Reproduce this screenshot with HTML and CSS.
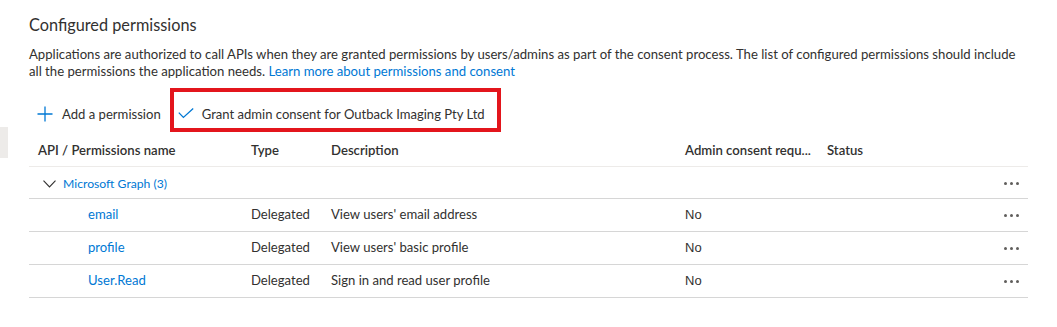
FILE: index.html
```html
<!DOCTYPE html>
<html lang="en">
<head>
<meta charset="utf-8">
<title>Configured permissions</title>
<link rel="stylesheet" href="styles.css">
</head>
<body>
<div class="page">
  <div class="side"><div class="side-block"></div></div>
  <main class="main">
    <h2 class="title">Configured permissions</h2>
    <p class="desc">Applications are authorized to call APIs when they are granted permissions by users/admins as part of the consent process. The list of configured permissions should include all the permissions the application needs. <a class="link" href="#">Learn more about permissions and consent</a></p>
    <div class="toolbar">
      <button class="tb-btn add-btn" type="button">
        <svg class="ico-plus" width="16" height="16" viewBox="0 0 16 16"><path d="M8 0.5V15.5M0.5 8H15.5" stroke="#0078d4" stroke-width="1.3" fill="none"/></svg>
        <span>Add a permission</span>
      </button>
      <button class="tb-btn grant-btn" type="button">
        <svg class="ico-check" width="16" height="11" viewBox="0 0 16 11"><path d="M0.8 4.6L5.4 9.4L15.2 0.6" stroke="#0078d4" stroke-width="1.3" fill="none"/></svg>
        <span>Grant admin consent for Outback Imaging Pty Ltd</span>
      </button>
    </div>
    <div class="table">
      <div class="row head">
        <div class="cell">API / Permissions name</div>
        <div class="cell">Type</div>
        <div class="cell">Description</div>
        <div class="cell">Admin consent requ...</div>
        <div class="cell">Status</div>
        <div class="cell"></div>
      </div>
      <div class="row group">
        <div class="cell group-name">
          <svg class="chev" width="13" height="8" viewBox="0 0 13 8"><path d="M0.5 0.6L6.5 7L12.5 0.6" stroke="#323130" stroke-width="1.1" fill="none"/></svg>
          <a class="link" href="#">Microsoft Graph (3)</a>
        </div>
        <div class="cell"></div><div class="cell"></div><div class="cell"></div><div class="cell"></div>
        <div class="cell more"><span class="dots"><i></i><i></i><i></i></span></div>
      </div>
      <div class="row item">
        <div class="cell perm"><a class="link" href="#">email</a></div>
        <div class="cell">Delegated</div>
        <div class="cell">View users' email address</div>
        <div class="cell no">No</div>
        <div class="cell"></div>
        <div class="cell more"><span class="dots"><i></i><i></i><i></i></span></div>
      </div>
      <div class="row item">
        <div class="cell perm"><a class="link" href="#">profile</a></div>
        <div class="cell">Delegated</div>
        <div class="cell">View users' basic profile</div>
        <div class="cell no">No</div>
        <div class="cell"></div>
        <div class="cell more"><span class="dots"><i></i><i></i><i></i></span></div>
      </div>
      <div class="row item">
        <div class="cell perm"><a class="link" href="#">User.Read</a></div>
        <div class="cell">Delegated</div>
        <div class="cell">Sign in and read user profile</div>
        <div class="cell no">No</div>
        <div class="cell"></div>
        <div class="cell more"><span class="dots"><i></i><i></i><i></i></span></div>
      </div>
    </div>
  </main>
</div>
</body>
</html>
```
FILE: styles.css
```css
* { box-sizing: border-box; }
body {
  margin: 0;
  background: #ffffff;
  color: #323130;
  font-family: Lato, "Open Sans", sans-serif;
  font-size: 13.1px;
}
.page { display: flex; }
.side { width: 8px; flex: none; }
.side-block { margin-top: 127px; height: 31px; background: #edebe9; }
.main { padding: 13px 0 0 21px; width: 1020px; }

.title {
  margin: 0;
  font-size: 16.3px;
  font-weight: 400;
  line-height: 24px;
  color: #323130;
}
.desc {
  margin: 9px 0 0;
  width: 994px;
  font-size: 13.15px;
  line-height: 17px;
}
.link { color: #0078d4; text-decoration: none; }

.toolbar { display: flex; margin-top: 8px; height: 44px; }
.tb-btn {
  display: flex;
  align-items: center;
  border: 0;
  background: none;
  font: inherit;
  font-size: 13.1px;
  color: #323130;
  line-height: 20px;
  cursor: pointer;
}
.add-btn { padding: 8px 0 0 8px; gap: 9px; height: 44px; }
.ico-plus { flex: none; }
.grant-btn {
  margin-left: 9px;
  border: 4px solid #e3151c;
  padding: 8px 12px 0 4px;
  gap: 8px;
  height: 44px;
  font-size: 13.05px;
}
.ico-check { flex: none; margin-top: -1px; }

.table { width: 999px; }
.row {
  display: grid;
  grid-template-columns: 213px 80px 354px 142px 1fr 40px;
  border-bottom: 1px solid #d6d6d6;
}
.cell {
  display: flex;
  align-items: center;
  padding-left: 9px;
  white-space: nowrap;
}
.head { height: 35px; border-bottom-color: #edebe9; }
.head .cell { font-weight: 600; font-size: 13.15px; padding-top: 1px; }
.group { height: 32px; padding-top: 2px; }
.group-name { padding-left: 14px; gap: 7px; font-size: 12.2px; }
.chev { flex: none; margin-top: 1px; }
.item { height: 33px; }
.item .cell { padding-bottom: 2px; }
.item .perm { padding-left: 59px; }
.no { font-family: "Liberation Sans", Arial, sans-serif; font-size: 13px; }
.more { justify-content: flex-end; padding-right: 9px; }
.item .more { padding-bottom: 0; }
.dots { display: flex; gap: 3px; }
.dots i { width: 3px; height: 3px; border-radius: 50%; background: #605e5c; }
```
